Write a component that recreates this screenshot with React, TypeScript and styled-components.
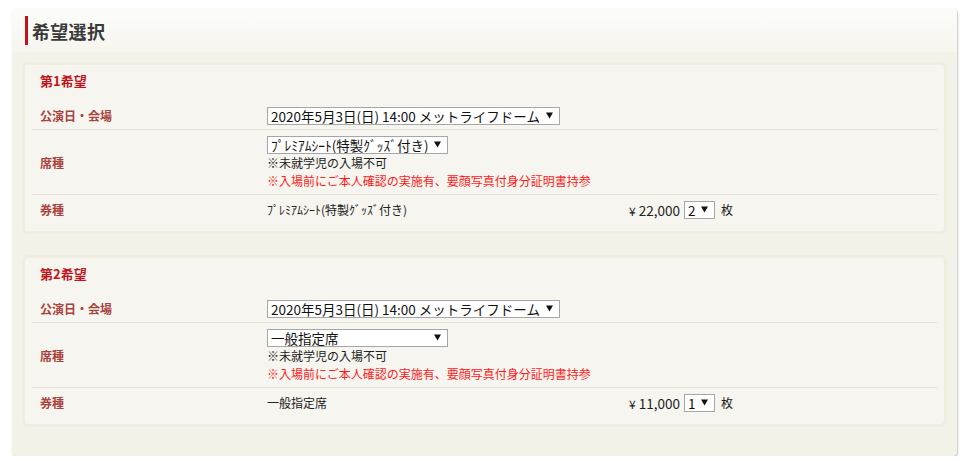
import React from "react";
import styled, { createGlobalStyle } from "styled-components";

const Global = createGlobalStyle`
  html, body { margin: 0; padding: 0; background: #ffffff; }
  body { font-family: "Noto Sans CJK JP", "Noto Sans", "DejaVu Sans", sans-serif; color: #222; }
`;

const Page = styled.div`
  padding: 9px 13px 0 12px;
`;

const Panel = styled.section`
  width: 945px;
  border-radius: 4px;
  background: #f3f2e8;
  box-shadow: 1px 1px 2px rgba(0, 0, 0, 0.22), 0 0 1px rgba(0, 0, 0, 0.06);
  overflow: hidden;
`;

const Header = styled.header`
  height: 43px;
  display: flex;
  align-items: center;
  padding-left: 13px;
  background: linear-gradient(to bottom, #fcfcfa 0%, #f6f5ee 100%);
`;

const Title = styled.h2`
  margin: 0;
  border-left: 3px solid #c1121c;
  padding-left: 4px;
  height: 29px;
  display: flex;
  align-items: center;
  font-size: 18px;
  font-weight: bold;
  color: #3a3a3a;
  letter-spacing: 0.3px;
`;

const Body = styled.div`
  padding: 10px 10px 29px;
  display: flex;
  flex-direction: column;
  gap: 21px;
`;

const Card = styled.div`
  border: 3px solid #eeede0;
  border-radius: 6px;
  background: #f6f5ef;
  padding: 6px 7px 8px;
`;

const CardTitle = styled.h3`
  margin: 0 0 10px;
  padding-left: 8px;
  line-height: 20px;
  font-size: 13px;
  font-weight: bold;
  color: #c0141c;
`;

const Row = styled.div<{ $last?: boolean }>`
  display: flex;
  align-items: center;
  padding: 6px 0 4px 8px;
  line-height: 18px;
  border-bottom: ${(p) => (p.$last ? "none" : "1px solid #e4e2d6")};
`;

const Label = styled.div`
  width: 227px;
  flex: none;
  font-size: 12px;
  font-weight: bold;
  color: #a8433d;
`;

const Value = styled.div`
  display: flex;
  flex-direction: column;
  align-items: flex-start;
  font-size: 12px;
  line-height: 18px;
`;

const Note = styled.div<{ $alert?: boolean }>`
  color: ${(p) => (p.$alert ? "#ff1a1a" : "#222")};
  line-height: 18px;
  height: 18px;
`;

const SelectWrap = styled.span<{ $w: number }>`
  position: relative;
  display: inline-block;
  width: ${(p) => p.$w}px;
  height: 18px;
  flex: none;
`;

const NativeSelect = styled.select`
  appearance: none;
  -webkit-appearance: none;
  box-sizing: border-box;
  display: block;
  width: 100%;
  height: 18px;
  margin: 0;
  padding: 0 14px 0 3px;
  border: 1px solid #a6a6a6;
  border-radius: 0;
  background: #ffffff;
  font-family: "Noto Sans CJK JP", "Noto Sans", sans-serif;
  font-size: 13.5px;
  line-height: 16px;
  color: #111;
  outline: none;
`;

const Arrow = styled.svg`
  position: absolute;
  right: 7px;
  top: 5px;
  pointer-events: none;
`;

const TicketLine = styled.div`
  display: flex;
  align-items: center;
  font-size: 12px;
  height: 18px;
`;

const TicketName = styled.span`
  width: 362px;
  flex: none;
`;

const Price = styled.span`
  font-size: 13.5px;
  margin-right: 4px;
  color: #222;
`;

const Yen = styled.span`
  font-size: 12px;
  margin-right: 3px;
`;

const Unit = styled.span`
  margin-left: 6px;
  font-size: 12px;
`;

function Select({ width, value }: { width: number; value: string }) {
  return (
    <SelectWrap $w={width}>
      <NativeSelect defaultValue={value}>
        <option value={value}>{value}</option>
      </NativeSelect>
      <Arrow width="7" height="7" viewBox="0 0 7 7">
        <path d="M0 0.5 H7 L3.5 6.5 Z" fill="#111" />
      </Arrow>
    </SelectWrap>
  );
}

type Choice = {
  title: string;
  seat: string;
  price: string;
  qty: string;
};

const choices: Choice[] = [
  {
    title: "第1希望",
    seat: "ﾌﾟﾚﾐｱﾑｼｰﾄ(特製ｸﾞｯｽﾞ付き)",
    price: "22,000",
    qty: "2",
  },
  {
    title: "第2希望",
    seat: "一般指定席",
    price: "11,000",
    qty: "1",
  },
];

export default function App() {
  return (
    <>
      <Global />
      <Page>
        <Panel>
          <Header>
            <Title>希望選択</Title>
          </Header>
          <Body>
            {choices.map((c) => (
              <Card key={c.title}>
                <CardTitle>{c.title}</CardTitle>
                <Row>
                  <Label>公演日・会場</Label>
                  <Value>
                    <Select width={293} value="2020年5月3日(日) 14:00 メットライフドーム" />
                  </Value>
                </Row>
                <Row>
                  <Label>席種</Label>
                  <Value>
                    <Select width={181} value={c.seat} />
                    <Note>※未就学児の入場不可</Note>
                    <Note $alert>※入場前にご本人確認の実施有、要顔写真付身分証明書持参</Note>
                  </Value>
                </Row>
                <Row $last>
                  <Label>券種</Label>
                  <TicketLine>
                    <TicketName>{c.seat}</TicketName>
                    <Price>
                      <Yen>¥</Yen>
                      {c.price}
                    </Price>
                    <Select width={31} value={c.qty} />
                    <Unit>枚</Unit>
                  </TicketLine>
                </Row>
              </Card>
            ))}
          </Body>
        </Panel>
      </Page>
    </>
  );
}
